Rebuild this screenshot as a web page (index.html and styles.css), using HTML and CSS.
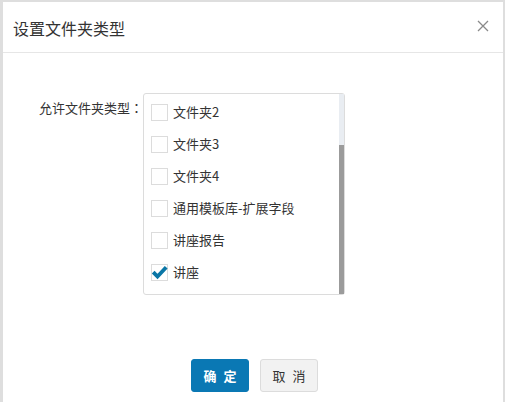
FILE: index.html
```html
<!DOCTYPE html>
<html lang="zh">
<head>
<meta charset="utf-8">
<link rel="stylesheet" href="styles.css">
</head>
<body>
<div class="frame">
  <div class="dialog">
    <div class="header">
      <div class="title">设置文件夹类型</div>
      <svg class="close" width="12" height="12" viewBox="0 0 12 12"><path d="M1 1L11 11M11 1L1 11" stroke="#8a8a8a" stroke-width="1.3" fill="none"/></svg>
    </div>
    <div class="body">
      <div class="field">
        <div class="label">允许文件夹类型<span class="colon" lang="ja">：</span></div>
        <div class="box">
          <div class="list">
            <div class="row"><span class="cb"></span><span class="txt">文件夹2</span></div>
            <div class="row"><span class="cb"></span><span class="txt">文件夹3</span></div>
            <div class="row"><span class="cb"></span><span class="txt">文件夹4</span></div>
            <div class="row"><span class="cb"></span><span class="txt">通用模板库-扩展字段</span></div>
            <div class="row"><span class="cb"></span><span class="txt">讲座报告</span></div>
            <div class="row"><span class="cb checked"><svg width="17" height="17" viewBox="0 0 17 17"><path d="M2.2 8.2L6.5 12.6L15.2 3.2" stroke="#0a76a6" stroke-width="3.8" fill="none" stroke-linejoin="miter"/></svg></span><span class="txt">讲座</span></div>
          </div>
          <div class="scroll"><div class="track"></div><div class="thumb"></div></div>
        </div>
      </div>
      <div class="footer">
        <button class="btn primary">确 定</button>
        <button class="btn">取 消</button>
      </div>
    </div>
  </div>
</div>
</body>
</html>
```
FILE: styles.css
```css
html, body {
  margin: 0;
  padding: 0;
  background: #dedede;
  font-family: "Noto Sans CJK SC", "Noto Sans", sans-serif;
  color: #333;
}
.frame {
  padding: 2px 2px 0 3px;
  height: 400px;
}
.dialog {
  background: #fff;
  height: 400px;
}
.header {
  height: 50px;
  border-bottom: 1px solid #e6e6e6;
  display: flex;
  align-items: center;
  justify-content: space-between;
  padding: 0 14px 0 10px;
}
.title {
  font-size: 16px;
  color: #333;
  line-height: 20px;
  padding-top: 1px;
}
.close {
  display: block;
  margin-top: -2px;
}
.body {
  padding-top: 40px;
}
.field {
  display: flex;
  align-items: flex-start;
}
.label {
  width: 140px;
  box-sizing: border-box;
  text-align: right;
  font-size: 13px;
  line-height: 18px;
  padding-top: 6px;
  color: #333;
}
.colon {
  font-family: "Noto Sans CJK JP", sans-serif;
}
.box {
  width: 202px;
  height: 202px;
  box-sizing: border-box;
  border: 1px solid #dcdcdc;
  border-radius: 3px;
  display: flex;
}
.list {
  flex: 1;
  padding: 2px 0 0 7px;
}
.row {
  height: 32px;
  display: flex;
  align-items: center;
}
.cb {
  width: 17px;
  height: 17px;
  box-sizing: border-box;
  border: 1px solid #dcdcdc;
  margin-right: 5px;
  position: relative;
}
.cb.checked svg {
  position: absolute;
  left: -1px;
  top: -1px;
}
.txt {
  font-size: 13px;
  line-height: 18px;
  color: #333;
}
.scroll {
  width: 5px;
  display: flex;
  flex-direction: column;
}
.track {
  height: 51px;
  background: #e9edf2;
}
.thumb {
  flex: 1;
  background: #9b9b9b;
}
.footer {
  margin-top: 64px;
  display: flex;
  justify-content: center;
  gap: 11px;
  padding-left: 3px;
}
.btn {
  width: 58px;
  height: 33px;
  border-radius: 3px;
  font-family: "Noto Sans CJK SC", sans-serif;
  font-size: 13px;
  letter-spacing: 2px;
  padding: 0 0 0 2px;
  border: 1px solid #dcdcdc;
  background: #f2f2f2;
  color: #333;
}
.btn.primary {
  background: #0a78b4;
  border-color: #0a78b4;
  color: #fff;
  font-weight: bold;
}
```
